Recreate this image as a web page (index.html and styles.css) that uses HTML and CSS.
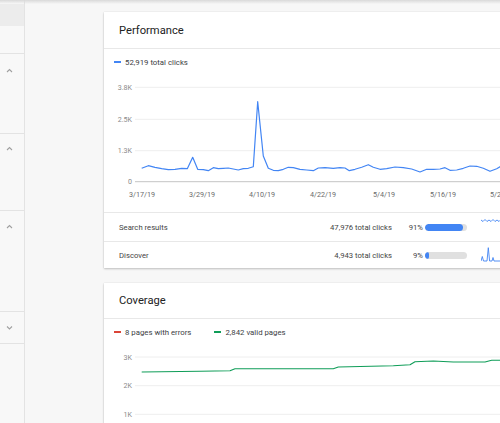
FILE: index.html
```html
<!DOCTYPE html>
<html>
<head>
<meta charset="utf-8">
<link rel="stylesheet" href="styles.css">
</head>
<body>
<div class="topshadow"></div>
<div class="app">
  <nav class="sidebar">
    <div class="side-spacer"></div>
    <div class="side-selected"></div>
    <div class="side-item"></div>
    <div class="side-section s1"><svg class="chev" width="7" height="5" viewBox="0 0 7 5"><polyline points="1,4 3.5,1.5 6,4"/></svg></div>
    <div class="side-section s2"><svg class="chev" width="7" height="5" viewBox="0 0 7 5"><polyline points="1,4 3.5,1.5 6,4"/></svg></div>
    <div class="side-section s3"><svg class="chev" width="7" height="5" viewBox="0 0 7 5"><polyline points="1,4 3.5,1.5 6,4"/></svg></div>
    <div class="side-section s4"><svg class="chev" width="7" height="5" viewBox="0 0 7 5"><polyline points="1,1.5 3.5,4 6,1.5"/></svg></div>
  </nav>
  <main class="main">
    <section class="card">
      <header class="card-head">Performance</header>
      <div class="legend">
        <span class="dash blue"></span><span class="legend-text">52,919 total clicks</span>
      </div>
      <svg class="chart perf" width="420" height="137" viewBox="0 0 420 137">
        <g class="grid">
          <line x1="31" y1="12.3" x2="420" y2="12.3"/>
          <line x1="31" y1="44.3" x2="420" y2="44.3"/>
          <line x1="31" y1="75.7" x2="420" y2="75.7"/>
        </g>
        <line class="axis" x1="31" y1="106.7" x2="420" y2="106.7"/>
        <g class="ylab">
          <text x="28" y="15">3.8K</text>
          <text x="28" y="46.7">2.5K</text>
          <text x="28" y="77.7">1.3K</text>
          <text x="28" y="109.3">0</text>
        </g>
        <g class="xlab">
          <text x="38" y="122">3/17/19</text>
          <text x="98" y="122">3/29/19</text>
          <text x="158" y="122">4/10/19</text>
          <text x="219" y="122">4/22/19</text>
          <text x="280" y="122">5/4/19</text>
          <text x="339" y="122">5/16/19</text>
          <text x="399" y="122">5/28/19</text>
        </g>
        <polyline class="line-blue" points="37.7,93.3 44.3,90.7 51,92.3 57.7,93.7 64.3,94.7 71,94.3 77.7,93.3 83.3,93.7 88.7,82.3 93.7,94.3 99.3,94.7 104.3,95.7 109.3,92.7 114.3,93.7 119.3,93.3 124.3,93 129.3,94 134.3,95 139.3,93.7 144.3,93.3 149.3,91.7 153.7,26.7 159.3,81 164.3,93.3 169.3,95.3 174.3,95.7 179.3,94.3 184.3,92.3 189.3,92.7 196,94.3 202.7,95 209.3,95.7 214.3,93 221,92.7 229.3,93.3 236,92.7 241,93 245.3,95.7 251,94.3 257.7,92.3 264.3,89.7 269.3,92.3 276,94.3 282.7,93.7 291,92 299.3,92.7 307.7,94 316,97 322.7,94.3 329.3,94.3 336,94 341,92.7 346,95.3 352.7,95 359.3,93.3 366,91 372.7,91.3 379.3,93.3 386,96.3 392.7,93.7 396,91.7 406,90 416,92"/>
      </svg>
      <div class="table">
        <div class="row">
          <span class="name">Search results</span>
          <span class="clicks">47,976 total clicks</span>
          <span class="pct">91%</span>
          <span class="bar"><span class="fill" style="width:91%"></span></span>
          <svg class="spark" width="40" height="28" viewBox="0 0 40 28"><polyline points="0,7 2,8.5 4,6.5 6,8.5 8,7 10,8.5 12,6.5 14,8.5 16,7 18,8.5 20,6.5 22,8.5 24,7 26,8.5 28,6.5 30,8.5 32,7 34,8.5 36,6.5 38,8.5 40,7"/></svg>
        </div>
        <div class="row last">
          <span class="name">Discover</span>
          <span class="clicks">4,943 total clicks</span>
          <span class="pct">9%</span>
          <span class="bar"><span class="fill" style="width:9%"></span></span>
          <svg class="spark" width="40" height="26" viewBox="0 0 40 26"><polyline points="0,19 1.3,14.5 2.5,19 6,19 7.3,5.7 8.6,19 11,19 12,15.5 13,19 40,19"/></svg>
        </div>
      </div>
    </section>
    <section class="card second">
      <header class="card-head">Coverage</header>
      <div class="legend">
        <span class="dash red"></span><span class="legend-text">8 pages with errors</span>
        <span class="dash green gap"></span><span class="legend-text">2,842 valid pages</span>
      </div>
      <svg class="chart cov" width="420" height="120" viewBox="0 0 420 120">
        <g class="grid">
          <line x1="31" y1="12" x2="420" y2="12"/>
          <line x1="31" y1="40.7" x2="420" y2="40.7"/>
          <line x1="31" y1="69.3" x2="420" y2="69.3"/>
        </g>
        <g class="ylab">
          <text x="28" y="14.7">3K</text>
          <text x="28" y="43.3">2K</text>
          <text x="28" y="72">1K</text>
        </g>
        <polyline class="line-green" points="37.7,27 96,26.3 126,25.7 131,23.7 229.3,23.7 234.3,22 289.3,20.7 306,19.7 311,16.7 329.3,16 349.3,17 381,17 387.7,15.3 396,15.3 420,15"/>
      </svg>
    </section>
  </main>
</div>
</body>
</html>
```
FILE: styles.css
```css
html, body {
  margin: 0;
  padding: 0;
  width: 500px;
  height: 423px;
  overflow: hidden;
  background: #f7f7f7;
  font-family: Roboto, "Noto Sans", sans-serif;
}

.topshadow {
  position: fixed;
  top: 0;
  left: 0;
  right: 0;
  height: 4px;
  background: linear-gradient(#d9d9d9, rgba(230,230,230,0));
  z-index: 5;
}

.app {
  display: flex;
  height: 423px;
}

.sidebar {
  width: 24px;
  flex: 0 0 24px;
  border-right: 1px solid #e3e3e3;
  background: #f8f8f8;
  display: flex;
  flex-direction: column;
}

.side-spacer { height: 4px; }
.side-selected { height: 22px; background: #ececec; }
.side-item { height: 28px; box-sizing: border-box; border-bottom: 1px solid #e3e3e3; }
.side-section {
  box-sizing: border-box;
  border-bottom: 1px solid #e3e3e3;
  padding-left: 6px;
}
.side-section.s1 { height: 80px; padding-top: 14px; }
.side-section.s2 { height: 77px; padding-top: 12px; }
.side-section.s3 { height: 101px; padding-top: 13px; }
.side-section.s4 { height: 32px; padding-top: 13px; }

.chev { display: block; }
.chev polyline {
  fill: none;
  stroke: #a0a0a0;
  stroke-width: 1.1;
}

.main {
  flex: 1;
  overflow: hidden;
  padding: 12px 0 0 79px;
  display: flex;
  flex-direction: column;
  gap: 15px;
}

.card {
  width: 420px;
  flex: 0 0 auto;
  background: #fff;
  box-shadow: 0 1px 2px rgba(0,0,0,0.22), 0 0 1px rgba(0,0,0,0.12);
}

.card-head {
  height: 36px;
  border-bottom: 1px solid #e8e8e8;
  display: flex;
  align-items: center;
  padding-left: 15px;
  font-size: 11.2px;
  color: #222;
}
.card.second .card-head { height: 35px; }

.legend {
  height: 26px;
  display: flex;
  align-items: center;
  padding-left: 10px;
  font-size: 7.8px;
  color: #3c4043;
}
.dash {
  display: inline-block;
  width: 7px;
  height: 2px;
  margin-right: 4px;
}
.dash.blue { background: #4285f4; }
.dash.red { background: #db4437; }
.dash.green { background: #0f9d58; }
.dash.gap { margin-left: 23px; }

.chart { display: block; }
.grid line { stroke: #eeeeee; stroke-width: 1; }
.axis { stroke: #c4c4c4; stroke-width: 1; }
.ylab text {
  font-size: 7.1px;
  fill: #8a8a8a;
  text-anchor: end;
  font-family: Roboto, sans-serif;
}
.xlab text {
  font-size: 7.2px;
  fill: #6b6b6b;
  text-anchor: middle;
  font-family: Roboto, sans-serif;
}
.line-blue { fill: none; stroke: #4285f4; stroke-width: 1.2; stroke-linejoin: round; }
.line-green { fill: none; stroke: #0f9d58; stroke-width: 1.1; stroke-linejoin: round; }

.table { border-top: 1px solid #e8e8e8; }
.row {
  height: 28px;
  display: flex;
  align-items: center;
  padding-left: 15px;
  font-size: 7.7px;
  color: #444;
  border-bottom: 1px solid #e8e8e8;
}
.row.last { height: 26px; border-bottom: none; }
.name { flex: 0 0 180px; }
.clicks { flex: 0 0 93px; text-align: right; }
.pct { flex: 0 0 31px; text-align: right; }
.bar {
  flex: 0 0 42px;
  height: 7px;
  margin-left: 2px;
  border-radius: 4px;
  background: #e0e0e0;
  overflow: hidden;
  display: flex;
}
.fill {
  display: block;
  height: 100%;
  background: #4285f4;
  border-radius: 4px;
}
.spark { margin-left: 14px; flex: 0 0 40px; display: block; }
.spark polyline { fill: none; stroke: #4285f4; stroke-width: 0.9; }
```
